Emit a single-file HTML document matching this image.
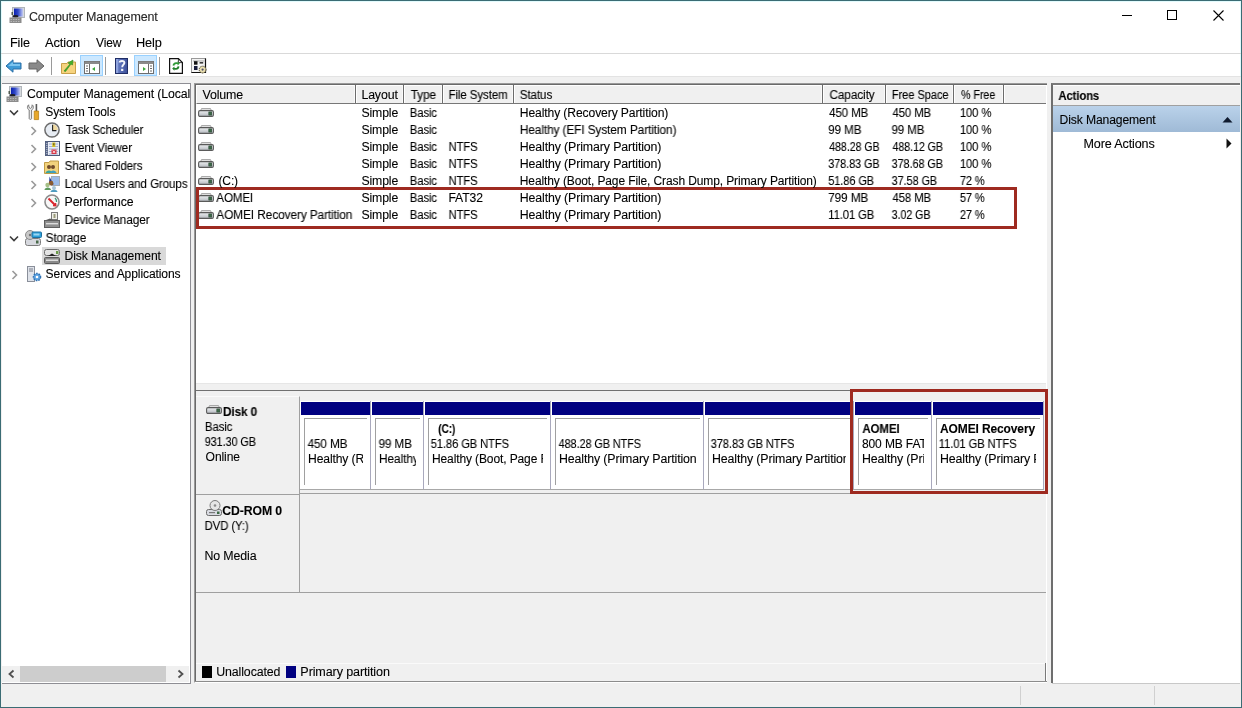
<!DOCTYPE html>
<html><head><meta charset="utf-8">
<style>
*{margin:0;padding:0;box-sizing:border-box}
html,body{width:1242px;height:708px;overflow:hidden;background:#fff;font-family:"Liberation Sans",sans-serif;font-size:12px}
.a{position:absolute}
svg{position:absolute;overflow:visible}
.t{position:absolute;font-family:"Liberation Sans",sans-serif;font-size:12px;line-height:15px;white-space:nowrap;letter-spacing:-0.12px;color:#000;transform-origin:0 0;will-change:transform;-webkit-text-stroke:0.1px #000}
.sep{position:absolute;top:401px;width:1px;height:88px;background:#a9a9bd}
.pbar{position:absolute;top:402px;height:13px;background:#000080}
.pbox{position:absolute;top:418px;height:67px;border-left:1px solid #a0a0a0;border-top:1px solid #a0a0a0;background:#fff;overflow:hidden}
.pin{position:absolute;left:0;top:0;right:4px;bottom:0;overflow:hidden}
.hs{position:absolute;top:85px;width:1px;height:18px;background:#6c6c6c;box-shadow:1px 0 0 #fff,-1px 0 0 #fafafa}
.tsep{position:absolute;top:57px;width:1px;height:18px;background:#9a9a9a}
.hl{position:absolute;top:55px;width:23px;height:21px;background:#cce8ff;border:1px solid #99d1ff}
</style></head><body>
<svg width="0" height="0" style="position:absolute"><defs>
<symbol id="dsk" viewBox="0 0 16 9"><linearGradient id="dg" x1="0" y1="0" x2="0" y2="1"><stop offset="0" stop-color="#eef0f2"/><stop offset="1" stop-color="#b4b8be"/></linearGradient><path d="M2.5 2.8 L3.5 0.6 L12.5 0.6 L13.5 2.8" fill="#e6e6e6" stroke="#9a9a9a" stroke-width="0.9"/><rect x="0.6" y="2.6" width="14.8" height="5.8" rx="1.4" fill="url(#dg)" stroke="#5a5a5a" stroke-width="1.1"/><rect x="10.8" y="3.9" width="3" height="3.2" fill="#3d6848" stroke="#23432c" stroke-width="0.5"/></symbol>
</defs></svg>
<!-- window frame -->
<div class="a" style="left:0;top:0;width:1242px;height:708px;border:1px solid #3b6c74;background:#fff;box-shadow:inset 0 0 0 1px #e2fbfd"></div>
<!-- menu line -->
<div class="a" style="left:1px;top:53px;width:1240px;height:1px;background:#d9d9d9"></div>
<!-- grey band + status -->
<div class="a" style="left:1px;top:76px;width:1240px;height:631px;background:#f0f0f0;border-top:1px solid #e3e3e3"></div>

<!-- title icon -->
<svg style="left:9px;top:7px" width="16" height="16" viewBox="0 0 16 16">
 <defs><linearGradient id="scr" x1="0" x2="1" y1="0" y2="0"><stop offset="0" stop-color="#0c22b0"/><stop offset="0.45" stop-color="#3048c8"/><stop offset="1" stop-color="#c4ccf4"/></linearGradient></defs>
 <rect x="3.5" y="0.5" width="12" height="10" fill="#d6dade" stroke="#b0b5ba"/>
 <rect x="5" y="1.5" width="9" height="8" fill="url(#scr)"/>
 <ellipse cx="6.5" cy="9.3" rx="3" ry="1.3" fill="#1e1e28"/>
 <rect x="2.5" y="5" width="1.5" height="3" fill="#505a50"/>
 <rect x="0.5" y="10.5" width="12" height="5.5" fill="#8c8c8c"/>
 <path d="M1.5 12.5h10M1.5 14.5h10" stroke="#c4c4c4" stroke-width="0.8" stroke-dasharray="1.5 1"/>
</svg>
<div class="a" style="left:0;top:0"></div>
<!-- window controls -->
<div class="a" style="left:1122px;top:15px;width:10px;height:1px;background:#000"></div>
<div class="a" style="left:1167px;top:10px;width:10px;height:10px;border:1px solid #000"></div>
<svg style="left:1213px;top:10px" width="11" height="11" viewBox="0 0 11 11"><path d="M0.5 0.5 L10.5 10.5 M10.5 0.5 L0.5 10.5" stroke="#000" stroke-width="1.1"/></svg>

<!-- toolbar -->
<svg style="left:5px;top:59px" width="17" height="14" viewBox="0 0 17 14">
 <path d="M1 7 L8 0.8 L8 4 L16 4 L16 10 L8 10 L8 13.2 Z" fill="#3e9ad6" stroke="#2a6fa6" stroke-width="1"/>
 <path d="M3 7 L8 3 L8 5 L15 5 L15 7 Z" fill="#7cc4ef"/>
</svg>
<svg style="left:28px;top:59px" width="17" height="14" viewBox="0 0 17 14">
 <path d="M16 7 L9 0.8 L9 4 L1 4 L1 10 L9 10 L9 13.2 Z" fill="#8a8a8a" stroke="#666" stroke-width="1"/>
</svg>
<div class="tsep" style="left:51px"></div>
<svg style="left:61px;top:59px" width="15" height="15" viewBox="0 0 15 15">
 <path d="M0.5 4.5 L6 4.5 L7 3 L14.5 3 L14.5 14.5 L0.5 14.5 Z" fill="#f6d37e" stroke="#c9a14a"/>
 <path d="M3 12 L9 5 L7 4 L12 1 L11.5 6 L10 5 L4.5 12.5 Z" fill="#43b02a" stroke="#2d8a1c" stroke-width="0.6"/>
</svg>
<div class="hl" style="left:80px"></div>
<svg style="left:84px;top:61px" width="16" height="13" viewBox="0 0 16 13">
 <rect x="0.5" y="0.5" width="15" height="12" fill="#fff" stroke="#6d6d6d"/>
 <rect x="0.5" y="0.5" width="15" height="2.5" fill="#8a8a8a"/>
 <rect x="5" y="3" width="1" height="10" fill="#6d6d6d"/>
 <path d="M2 5h2M2 7.5h2M2 10h2" stroke="#6d6d6d"/>
 <path d="M11 6 L8 8 L11 10 Z" fill="#3aa83a"/>
</svg>
<div class="tsep" style="left:105px"></div>
<svg style="left:115px;top:58px" width="13" height="16" viewBox="0 0 13 16">
 <defs><linearGradient id="hg" x1="0" x2="1" y1="0" y2="0"><stop offset="0" stop-color="#6d84cc"/><stop offset="1" stop-color="#3c4f98"/></linearGradient></defs>
 <rect x="0.5" y="0.5" width="12" height="15" fill="url(#hg)" stroke="#1f2d66"/>
 <rect x="1" y="1" width="2.2" height="14" fill="#8ea2dc"/>
 <path d="M4.6 4.6 C4.6 2.6 9.4 2.2 9.4 4.8 C9.4 6.6 7.2 6.8 7.2 9.2" fill="none" stroke="#f2f4fa" stroke-width="1.9"/>
 <rect x="6.1" y="10.8" width="2.2" height="2.2" fill="#f2f4fa"/>
</svg>
<div class="hl" style="left:134px"></div>
<svg style="left:138px;top:61px" width="16" height="13" viewBox="0 0 16 13">
 <rect x="0.5" y="0.5" width="15" height="12" fill="#fff" stroke="#6d6d6d"/>
 <rect x="0.5" y="0.5" width="15" height="2.5" fill="#8a8a8a"/>
 <rect x="10" y="3" width="1" height="10" fill="#6d6d6d"/>
 <path d="M12 5h2M12 7.5h2M12 10h2" stroke="#6d6d6d"/>
 <path d="M5 6 L8 8 L5 10 Z" fill="#3aa83a"/>
</svg>
<div class="tsep" style="left:159px"></div>
<svg style="left:169px;top:58px" width="14" height="16" viewBox="0 0 14 16">
 <path d="M0.6 0.6 L9.4 0.6 L13.4 4.6 L13.4 15.4 L0.6 15.4 Z" fill="#fff" stroke="#111" stroke-width="1.2"/>
 <path d="M9.4 0.6 L9.4 4.6 L13.4 4.6" fill="none" stroke="#111" stroke-width="0.8"/>
 <path d="M3.6 7.6 C3.6 5 6.2 3.6 8.6 4.6 L8.6 3.2 L10.8 5.6 L8.6 7.6 L8.6 6.2 C7 5.6 5.4 6.4 5.4 7.8 Z" fill="#2e9a36"/>
 <path d="M10.4 8.4 C10.4 11 7.8 12.4 5.4 11.4 L5.4 12.8 L3.2 10.4 L5.4 8.4 L5.4 9.8 C7 10.4 8.6 9.6 8.6 8.2 Z" fill="#1f7f28"/>
</svg>
<svg style="left:191px;top:58px" width="17" height="17" viewBox="0 0 17 17">
 <rect x="0.5" y="0.5" width="14" height="14" fill="#f4f4f4" stroke="#9a9a9a"/>
 <path d="M0.5 14.5 L14.5 14.5 L14.5 0.5" fill="none" stroke="#111" stroke-width="1.2"/>
 <rect x="2" y="2" width="12" height="2" fill="#cfcfcf"/>
 <rect x="3" y="3.2" width="3.5" height="3.5" fill="#111"/>
 <rect x="8.6" y="4.2" width="3.6" height="1.3" fill="#111"/>
 <rect x="3" y="8" width="3.5" height="4" fill="#161a3a"/>
 <circle cx="11.6" cy="11.6" r="3.4" fill="#e9dfb0" stroke="#3a3420" stroke-width="1" stroke-dasharray="1.3 0.9"/>
 <circle cx="11.6" cy="11.6" r="1.1" fill="#4a4a6a"/>
</svg>

<!-- LEFT PANEL -->
<div class="a" style="left:2px;top:83px;width:189px;height:601px;border:1px solid #8e8e94;border-left:none;background:#fff"></div>
<div class="a" style="left:42px;top:247px;width:124px;height:18px;background:#d9d9d9"></div>
<div class="clip" style="position:absolute;left:1px;top:84px;width:189px;height:580px;overflow:hidden">
<div class="t" id="t6" style="left:27px;top:3px;transform:translateX(-1.03px) scaleX(1.0268);">Computer Management (Local</div>
<div class="t" id="t7" style="left:45.3px;top:21px;transform:translateX(-0.70px) scaleX(1.0044);">System Tools</div>
<div class="t" id="t8" style="left:64.8px;top:39px;transform:translateX(-0.19px) scaleX(0.9638);">Task Scheduler</div>
<div class="t" id="t9" style="left:64.6px;top:57px;transform:translateX(-1.36px) scaleX(0.9750);">Event Viewer</div>
<div class="t" id="t10" style="left:64.6px;top:75px;transform:translateX(-1.36px) scaleX(0.9684);">Shared Folders</div>
<div class="t" id="t11" style="left:64.6px;top:93px;transform:translateX(-1.36px) scaleX(0.9683);">Local Users and Groups</div>
<div class="t" id="t12" style="left:64.6px;top:111px;transform:translateX(-1.43px) scaleX(1.0227);">Performance</div>
<div class="t" id="t13" style="left:64.6px;top:129px;transform:translateX(-1.39px) scaleX(0.9918);">Device Manager</div>
<div class="t" id="t14" style="left:45.6px;top:147px;transform:translateX(-1.38px) scaleX(0.9850);">Storage</div>
<div class="t" id="t15" style="left:64.6px;top:165px;transform:translateX(-1.42px) scaleX(1.0138);">Disk Management</div>
<div class="t" id="t16" style="left:45.6px;top:183px;transform:translateX(-1.41px) scaleX(1.0083);">Services and Applications</div>
</div>
<!-- tree icons -->
<svg style="left:6px;top:86px" width="16" height="16" viewBox="0 0 16 16">
  <rect x="3.5" y="0.5" width="12" height="10" fill="#d6dade" stroke="#b0b5ba"/>
 <rect x="5" y="1.5" width="9" height="8" fill="url(#scr)"/>
 <ellipse cx="6.5" cy="9.3" rx="3" ry="1.3" fill="#1e1e28"/>
 <rect x="2.5" y="5" width="1.5" height="3" fill="#505a50"/>
 <rect x="0.5" y="10.5" width="12" height="5.5" fill="#8c8c8c"/>
 <path d="M1.5 12.5h10M1.5 14.5h10" stroke="#c4c4c4" stroke-width="0.8" stroke-dasharray="1.5 1"/>
</svg>
<svg style="left:9px;top:109px" width="10" height="7" viewBox="0 0 10 7"><path d="M1 1.5 L5 5.5 L9 1.5" fill="none" stroke="#3c3c3c" stroke-width="1.6"/></svg>
<svg style="left:27px;top:104px" width="12" height="16" viewBox="0 0 12 16">
 <path d="M1.6 0.8 C-0.2 2.2 0.2 5.2 2.2 6 L2.2 14.6 C2.2 15.6 4.6 15.6 4.6 14.6 L4.6 6 C6.6 5.2 7 2.2 5.2 0.8 L4.8 3.4 L3.4 4.4 L2 3.4 Z" fill="#ececec" stroke="#6e6e6e" stroke-width="0.9"/>
 <rect x="8.6" y="0" width="1.6" height="7" fill="#5a5a5a"/>
 <path d="M7.2 7 L11.6 7 L11.6 15.6 L7.2 15.6 Z" fill="#e8a82a" stroke="#b07a10" stroke-width="0.7"/>
</svg>
<!-- level2 chevrons -->
<svg style="left:30px;top:126px" width="7" height="10" viewBox="0 0 7 10"><path d="M1.5 1 L5.5 5 L1.5 9" fill="none" stroke="#9a9a9a" stroke-width="1.6"/></svg>
<svg style="left:30px;top:144px" width="7" height="10" viewBox="0 0 7 10"><path d="M1.5 1 L5.5 5 L1.5 9" fill="none" stroke="#9a9a9a" stroke-width="1.6"/></svg>
<svg style="left:30px;top:162px" width="7" height="10" viewBox="0 0 7 10"><path d="M1.5 1 L5.5 5 L1.5 9" fill="none" stroke="#9a9a9a" stroke-width="1.6"/></svg>
<svg style="left:30px;top:180px" width="7" height="10" viewBox="0 0 7 10"><path d="M1.5 1 L5.5 5 L1.5 9" fill="none" stroke="#9a9a9a" stroke-width="1.6"/></svg>
<svg style="left:30px;top:198px" width="7" height="10" viewBox="0 0 7 10"><path d="M1.5 1 L5.5 5 L1.5 9" fill="none" stroke="#9a9a9a" stroke-width="1.6"/></svg>
<svg style="left:9px;top:235px" width="10" height="7" viewBox="0 0 10 7"><path d="M1 1.5 L5 5.5 L9 1.5" fill="none" stroke="#3c3c3c" stroke-width="1.6"/></svg>
<svg style="left:11px;top:270px" width="7" height="10" viewBox="0 0 7 10"><path d="M1.5 1 L5.5 5 L1.5 9" fill="none" stroke="#9a9a9a" stroke-width="1.6"/></svg>
<!-- task scheduler clock -->
<svg style="left:44px;top:122px" width="16" height="16" viewBox="0 0 16 16">
 <circle cx="8" cy="8" r="7.1" fill="#e7ecf3" stroke="#6c6c6c" stroke-width="1.5"/>
 <path d="M8.6 2.2 A5.8 5.8 0 0 1 13.8 8 L8.6 8 Z" fill="#efd9a0"/>
 <path d="M8.6 2.8 L8.6 8.6 L12.4 8.6" fill="none" stroke="#222" stroke-width="1.1"/>
</svg>
<!-- event viewer -->
<svg style="left:45px;top:141px" width="15" height="15" viewBox="0 0 15 15">
 <rect x="0.5" y="0.5" width="14" height="14" fill="#e9edf6" stroke="#4e5a78"/>
 <rect x="0.5" y="0.5" width="2.5" height="14" fill="#5d6a8a"/>
 <path d="M1.8 2v11" stroke="#cfd6e6" stroke-width="0.9" stroke-dasharray="1 1"/>
 <path d="M4 3h9M4 5.5h9M4 8h9M4 10.5h9M4 13h9" stroke="#8fa0cc" stroke-width="0.8"/>
 <rect x="7.3" y="1.5" width="3" height="4.5" fill="#d8c020"/>
 <rect x="8.4" y="2.3" width="0.9" height="2" fill="#333"/>
 <rect x="6.5" y="8.5" width="5" height="4.5" fill="#d83848"/>
 <path d="M7.8 9.6l2.4 2.4M10.2 9.6l-2.4 2.4" stroke="#fff" stroke-width="0.8"/>
</svg>
<!-- shared folders -->
<svg style="left:44px;top:160px" width="15" height="14" viewBox="0 0 15 14">
 <path d="M0.5 2.5 L5 2.5 L6 1 L14.5 1 L14.5 13.5 L0.5 13.5 Z" fill="#f2d27d" stroke="#c29c45"/>
 <circle cx="5" cy="7" r="2" fill="#704a2a"/>
 <circle cx="9" cy="7" r="2" fill="#704a2a"/>
 <path d="M1.5 13 C2 9.5 8 9.5 8.5 13 Z" fill="#3aa6a0"/>
 <path d="M6 13 C6.5 9.5 12 9.5 12.5 13 Z" fill="#3f9fc0"/>
</svg>
<!-- local users -->
<svg style="left:44px;top:176px" width="16" height="16" viewBox="0 0 16 16">
 <rect x="7.5" y="0.5" width="8" height="9" fill="#9cbbe8" stroke="#a8acb0"/>
 <path d="M5.5 0.5 L9.5 9 L5 9 Z" fill="#14309a"/>
 <circle cx="7" cy="7.2" r="2.4" fill="#8a5a30"/>
 <circle cx="3.5" cy="9" r="2.2" fill="#a8c088"/>
 <path d="M0.5 14 C0.5 10.5 7 10.5 7 14 Z" fill="#5f9a60"/>
 <circle cx="10" cy="12" r="2" fill="#a6c6d8"/>
 <path d="M6.5 16 C6.5 13 13.5 13 13.5 16 Z" fill="#4f9cc0"/>
</svg>
<!-- performance -->
<svg style="left:44px;top:194px" width="16" height="16" viewBox="0 0 16 16">
 <circle cx="8" cy="8" r="7" fill="#f7f7f7" stroke="#8a8a8a" stroke-width="1.6"/>
 <path d="M4.5 4.5 L11.5 11.5" stroke="#d8262e" stroke-width="2"/>
 <path d="M9 11.5 L11.8 11.8 L11.5 9" fill="none" stroke="#d8262e" stroke-width="1.4"/>
 <path d="M11 4 A5 5 0 0 1 12.5 8" stroke="#3a9a7a" stroke-width="1.2" fill="none"/>
</svg>
<!-- device manager -->
<svg style="left:44px;top:212px" width="16" height="16" viewBox="0 0 16 16">
 <rect x="7.5" y="0.5" width="6" height="7" fill="#f0f0e8" stroke="#7a7a7a"/>
 <rect x="9.5" y="2" width="2" height="4" fill="#9a9a7a"/>
 <path d="M2 8 L6 6.5 L9 8 Z" fill="#5a5a5a"/>
 <rect x="0.5" y="8.5" width="15" height="7" fill="#8e8e8e" stroke="#5e5e5e"/>
 <rect x="2" y="11" width="12" height="1.4" fill="#dcdcdc"/>
</svg>
<!-- storage -->
<svg style="left:25px;top:230px" width="17" height="16" viewBox="0 0 17 16">
 <rect x="0.5" y="8.5" width="15" height="7" rx="2" fill="#d6d8de" stroke="#7c7c7c"/>
 <rect x="11" y="10.5" width="2.5" height="3" fill="#4a6a4a"/>
 <circle cx="5" cy="5" r="4.5" fill="#c8c8c8" stroke="#8a8a8a"/>
 <circle cx="5" cy="5" r="1.2" fill="#777"/>
 <rect x="7" y="2" width="9.5" height="5.5" rx="1" fill="#2ea0d8" stroke="#1d6fa0"/>
 <rect x="8.5" y="3.5" width="6" height="2" fill="#9ad6f2"/>
</svg>
<!-- disk management -->
<svg style="left:44px;top:248px" width="16" height="16" viewBox="0 0 16 16">
 <rect x="0.5" y="1.5" width="15" height="6" rx="2" fill="#e4e4e4" stroke="#6c6c6c"/>
 <rect x="0.5" y="9.5" width="15" height="6" rx="1" fill="#8a8a8a" stroke="#5a5a5a"/>
 <rect x="2" y="11.5" width="12" height="1.5" fill="#dedede"/>
 <path d="M4 8 L8 5.5 L12 8 Z" fill="#222"/>
 <rect x="12" y="3" width="2.5" height="3" fill="#6a9a4a"/>
</svg>
<!-- services -->
<svg style="left:27px;top:266px" width="15" height="16" viewBox="0 0 15 16">
 <rect x="0.5" y="0.5" width="7" height="15" fill="#dfe3ea" stroke="#8a8f9a"/>
 <path d="M2 3h4M2 5h4" stroke="#7a7f8a"/>
 <circle cx="10" cy="11" r="3.6" fill="#5aa0e0" stroke="#2f6fb0" stroke-width="1.4" stroke-dasharray="1.6 1"/>
 <circle cx="10" cy="11" r="1.3" fill="#fff"/>
</svg>
<!-- left scrollbar -->
<div class="a" style="left:2px;top:666px;width:187px;height:16px;background:#f0f0f0"></div>
<div class="a" style="left:20px;top:666px;width:146px;height:16px;background:#cdcdcd"></div>
<svg style="left:8px;top:670px" width="7" height="8" viewBox="0 0 7 8"><path d="M5.5 0.5 L1.5 4 L5.5 7.5" fill="none" stroke="#505050" stroke-width="1.8"/></svg>
<svg style="left:177px;top:670px" width="7" height="8" viewBox="0 0 7 8"><path d="M1.5 0.5 L5.5 4 L1.5 7.5" fill="none" stroke="#505050" stroke-width="1.8"/></svg>

<!-- CENTER PANEL -->
<div class="a" style="left:194px;top:83px;width:853px;height:600px;border-left:1px solid #9a9a9a;border-top:1px solid #9a9a9a;border-bottom:1px solid #fff;background:#fff"></div>
<div class="a" style="left:195px;top:84px;width:1px;height:598px;background:#6a6a6a"></div>
<div class="a" style="left:195px;top:84px;width:852px;height:1px;background:#6a6a6a"></div>
<div class="a" style="left:196px;top:85px;width:850px;height:19px;background:#f0f0f0;border-top:1px solid #fff;border-left:1px solid #fff;border-bottom:1px solid #777"></div>
<div class="hs" style="left:355px"></div>
<div class="hs" style="left:403px"></div>
<div class="hs" style="left:442px"></div>
<div class="hs" style="left:513px"></div>
<div class="hs" style="left:822px"></div>
<div class="hs" style="left:885px"></div>
<div class="hs" style="left:953px"></div>
<div class="hs" style="left:1003px"></div>
<!-- volume icons -->
<svg style="left:198px;top:108px" width="16" height="9" viewBox="0 0 16 9"><use href="#dsk"/></svg>
<svg style="left:198px;top:125px" width="16" height="9" viewBox="0 0 16 9"><use href="#dsk"/></svg>
<svg style="left:198px;top:142px" width="16" height="9" viewBox="0 0 16 9"><use href="#dsk"/></svg>
<svg style="left:198px;top:159px" width="16" height="9" viewBox="0 0 16 9"><use href="#dsk"/></svg>
<svg style="left:198px;top:176px" width="16" height="9" viewBox="0 0 16 9"><use href="#dsk"/></svg>
<svg style="left:198px;top:193px" width="16" height="9" viewBox="0 0 16 9"><use href="#dsk"/></svg>
<svg style="left:198px;top:210px" width="16" height="9" viewBox="0 0 16 9"><use href="#dsk"/></svg>
<!-- disk area -->
<div class="a" style="left:196px;top:383px;width:850px;height:7px;background:#f0f0f0;border-top:1px solid #e6e6e6"></div>
<div class="a" style="left:196px;top:390px;width:850px;height:1px;background:#707070"></div>
<div class="a" style="left:196px;top:391px;width:850px;height:291px;background:#f0f0f0"></div>
<div class="a" style="left:196px;top:396px;width:104px;height:99px;border-right:1px solid #a0a0a0;border-bottom:1px solid #a0a0a0;border-top:1px solid #fafafa"></div>
<div class="a" style="left:300px;top:401px;width:744px;height:89px;background:#fff;border-bottom:1px solid #a8a8a8"></div>
<div class="a" style="left:196px;top:494px;width:104px;height:1px;background:#a0a0a0"></div>
<div class="a" style="left:299px;top:493px;width:747px;height:1px;background:#a0a0a0"></div>
<div class="a" style="left:196px;top:592px;width:850px;height:1px;background:#a0a0a0"></div>
<div class="a" style="left:299px;top:495px;width:1px;height:98px;background:#a0a0a0"></div>
<svg style="left:206px;top:405px" width="16" height="9" viewBox="0 0 16 9"><use href="#dsk"/></svg>
<svg style="left:206px;top:500px" width="16" height="16" viewBox="0 0 16 16">
 <rect x="0.5" y="9.5" width="15" height="6" rx="2" fill="#d9dbe2" stroke="#6a6a6a"/>
 <rect x="3" y="12" width="6" height="1.2" fill="#7a7a7a"/>
 <rect x="11" y="11.5" width="2.5" height="2.5" fill="#3d6a45"/>
 <circle cx="9" cy="5.5" r="5" fill="#e6e6e6" stroke="#7a7a7a"/>
 <circle cx="9" cy="5.5" r="1.3" fill="#8a8a8a"/>
</svg>
<!-- legend -->
<div class="a" style="left:196px;top:663px;width:850px;height:1px;background:#fafafa"></div>
<div class="a" style="left:195px;top:681px;width:852px;height:1px;background:#8c8c8c"></div>
<div class="a" style="left:202px;top:666px;width:10px;height:12px;background:#000"></div>
<div class="a" style="left:286px;top:666px;width:10px;height:12px;background:#000080"></div>
<div class="sep" style="left:370px"></div>
<div class="pbar" style="left:301px;width:69px"></div>
<div class="pbox" style="left:304px;width:63px"><div class="pin">
<div class="t" id="t87" style="left:2.6000000000000227px;top:18px;transform:translateX(-0.39px) scaleX(0.9775);">450 MB</div>
<div class="t" id="t88" style="left:2.6000000000000227px;top:33px;transform:scaleX(1.0117);">Healthy (Recovery Partition)</div>
</div></div>
<div class="sep" style="left:423px"></div>
<div class="pbar" style="left:372px;width:51px"></div>
<div class="pbox" style="left:375px;width:45px"><div class="pin">
<div class="t" id="t89" style="left:2.6000000000000227px;top:18px;transform:translateX(-0.39px) scaleX(0.9735);">99 MB</div>
<div class="t" id="t90" style="left:2.6000000000000227px;top:33px;transform:scaleX(0.9917);">Healthy (EFI System Partition)</div>
</div></div>
<div class="sep" style="left:550px"></div>
<div class="pbar" style="left:425px;width:125px"></div>
<div class="pbox" style="left:428px;width:119px"><div class="pin">
<div class="t" id="t91" style="left:10px;top:3px;font-weight:bold;transform:translateX(-0.85px) scaleX(0.8474);">(C:)</div>
<div class="t" id="t92" style="left:2.6000000000000227px;top:18px;transform:translateX(-1.31px) scaleX(0.9329);">51.86 GB NTFS</div>
<div class="t" id="t93" style="left:2.6000000000000227px;top:33px;transform:scaleX(1.0007);">Healthy (Boot, Page File, Crash Dump, Primary Partition)</div>
</div></div>
<div class="sep" style="left:703px"></div>
<div class="pbar" style="left:552px;width:151px"></div>
<div class="pbox" style="left:555px;width:145px"><div class="pin">
<div class="t" id="t94" style="left:2.6000000000000227px;top:18px;transform:translateX(-0.36px) scaleX(0.9100);">488.28 GB NTFS</div>
<div class="t" id="t95" style="left:2.6000000000000227px;top:33px;transform:scaleX(1.0301);">Healthy (Primary Partition)</div>
</div></div>
<div class="sep" style="left:853px"></div>
<div class="pbar" style="left:705px;width:148px"></div>
<div class="pbox" style="left:708px;width:142px"><div class="pin">
<div class="t" id="t96" style="left:2.6000000000000227px;top:18px;transform:translateX(-1.30px) scaleX(0.9258);">378.83 GB NTFS</div>
<div class="t" id="t97" style="left:2.6000000000000227px;top:33px;transform:scaleX(1.0301);">Healthy (Primary Partition)</div>
</div></div>
<div class="sep" style="left:931px"></div>
<div class="pbar" style="left:855px;width:76px"></div>
<div class="pbox" style="left:858px;width:70px"><div class="pin">
<div class="t" id="t98" style="left:3.3999999999999773px;top:3px;font-weight:bold;transform:translateX(0.38px) scaleX(0.9579);">AOMEI</div>
<div class="t" id="t99" style="left:2.6000000000000227px;top:18px;">800 MB FAT32</div>
<div class="t" id="t100" style="left:2.6000000000000227px;top:33px;transform:scaleX(1.0301);">Healthy (Primary Partition)</div>
</div></div>
<div class="sep" style="left:1043px"></div>
<div class="pbar" style="left:933px;width:110px"></div>
<div class="pbox" style="left:936px;width:104px"><div class="pin">
<div class="t" id="t101" style="left:3.3999999999999773px;top:3px;font-weight:bold;">AOMEI Recovery Partition</div>
<div class="t" id="t102" style="left:2.6000000000000227px;top:18px;transform:translateX(-1.31px) scaleX(0.9395);">11.01 GB NTFS</div>
<div class="t" id="t103" style="left:2.6000000000000227px;top:33px;transform:scaleX(1.0301);">Healthy (Primary Partition)</div>
</div></div>

<!-- ACTIONS PANEL -->
<div class="a" style="left:1051px;top:83px;width:189px;height:600px;border-left:2px solid #6e6e6e;border-top:2px solid #7a7a7a;background:#fff"></div>
<div class="a" style="left:1052px;top:683px;width:188px;height:1px;background:#c8c8c8"></div>
<div class="a" style="left:1045px;top:663px;width:1px;height:18px;background:#7a7a7a"></div>
<div class="a" style="left:1053px;top:85px;width:187px;height:21px;background:#f0f0f0;border-top:1px solid #fff;border-bottom:1px solid #a0a0a0"></div>
<div class="a" style="left:1053px;top:106px;width:187px;height:26px;background:linear-gradient(#bad2ea,#9fbad6)"></div>
<svg style="left:1222px;top:116px" width="11" height="7" viewBox="0 0 11 7"><path d="M0.5 6.5 L5.5 1 L10.5 6.5 Z" fill="#0f1a2e"/></svg>
<svg style="left:1226px;top:138px" width="6" height="11" viewBox="0 0 6 11"><path d="M0.5 0.5 L5.5 5.5 L0.5 10.5 Z" fill="#111"/></svg>

<!-- status bar separators -->
<div class="a" style="left:1020px;top:686px;width:1px;height:19px;background:#d0d0d0"></div>
<div class="a" style="left:1154px;top:686px;width:1px;height:19px;background:#d0d0d0"></div>
<!-- red boxes -->
<div class="a" style="left:196px;top:187px;width:821px;height:42px;border:3px solid #9e2a20"></div>
<div class="a" style="left:850px;top:389px;width:198px;height:105px;border:3px solid #9e2a20"></div>
<div class="t" id="t1" style="left:30px;top:10px;color:#2b2b2b;transform:translateX(-1.04px) scaleX(1.0398);">Computer Management</div>
<div class="t" id="t2" style="left:11px;top:36px;transform:translateX(-1.06px) scaleX(1.0588);">File</div>
<div class="t" id="t3" style="left:45px;top:36px;transform:translateX(0.00px) scaleX(1.0719);">Action</div>
<div class="t" id="t4" style="left:96px;top:36px;transform:translateX(0.00px) scaleX(1.0000);">View</div>
<div class="t" id="t5" style="left:137px;top:36px;transform:translateX(-1.07px) scaleX(1.0652);">Help</div>
<div class="t" id="t17" style="left:202.4px;top:88px;transform:translateX(0.41px) scaleX(1.0359);">Volume</div>
<div class="t" id="t18" style="left:362.4px;top:88px;transform:translateX(-0.62px) scaleX(1.0294);">Layout</div>
<div class="t" id="t19" style="left:410.7px;top:88px;transform:translateX(-0.30px) scaleX(0.9880);">Type</div>
<div class="t" id="t20" style="left:449.5px;top:88px;transform:translateX(-1.44px) scaleX(0.9617);">File System</div>
<div class="t" id="t21" style="left:520.7px;top:88px;transform:translateX(-1.26px) scaleX(0.9719);">Status</div>
<div class="t" id="t22" style="left:829.5px;top:88px;transform:translateX(-0.49px) scaleX(0.9848);">Capacity</div>
<div class="t" id="t23" style="left:892.7px;top:88px;transform:translateX(-1.21px) scaleX(0.9322);">Free Space</div>
<div class="t" id="t24" style="left:961px;top:88px;transform:translateX(0.00px) scaleX(0.9000);">% Free</div>
<div class="t" id="t25" style="left:362.4px;top:106px;transform:translateX(-0.61px) scaleX(1.0229);">Simple</div>
<div class="t" id="t26" style="left:410.7px;top:106px;transform:translateX(-1.23px) scaleX(0.9444);">Basic</div>
<div class="t" id="t27" style="left:520.8px;top:106px;transform:translateX(-1.21px) scaleX(1.0117);">Healthy (Recovery Partition)</div>
<div class="t" id="t28" style="left:829.2px;top:106px;transform:translateX(0.19px) scaleX(0.9575);">450 MB</div>
<div class="t" id="t29" style="left:892.5px;top:106px;transform:translateX(-0.47px) scaleX(0.9450);">450 MB</div>
<div class="t" id="t30" style="left:960.8px;top:106px;transform:translateX(-1.12px) scaleX(0.9375);">100 %</div>
<div class="t" id="t31" style="left:362.4px;top:123px;transform:translateX(-0.61px) scaleX(1.0229);">Simple</div>
<div class="t" id="t32" style="left:410.7px;top:123px;transform:translateX(-1.23px) scaleX(0.9444);">Basic</div>
<div class="t" id="t33" style="left:520.8px;top:123px;transform:translateX(-1.19px) scaleX(0.9917);">Healthy (EFI System Partition)</div>
<div class="t" id="t34" style="left:829.2px;top:123px;transform:translateX(-0.78px) scaleX(0.9727);">99 MB</div>
<div class="t" id="t35" style="left:892.5px;top:123px;transform:translateX(-1.44px) scaleX(0.9606);">99 MB</div>
<div class="t" id="t36" style="left:960.8px;top:123px;transform:translateX(-1.12px) scaleX(0.9375);">100 %</div>
<div class="t" id="t37" style="left:362.4px;top:140px;transform:translateX(-0.61px) scaleX(1.0229);">Simple</div>
<div class="t" id="t38" style="left:410.7px;top:140px;transform:translateX(-1.23px) scaleX(0.9444);">Basic</div>
<div class="t" id="t39" style="left:449.5px;top:140px;transform:translateX(-1.40px) scaleX(0.9345);">NTFS</div>
<div class="t" id="t40" style="left:520.8px;top:140px;transform:translateX(-1.24px) scaleX(1.0301);">Healthy (Primary Partition)</div>
<div class="t" id="t41" style="left:829.2px;top:140px;transform:translateX(0.18px) scaleX(0.8929);">488.28 GB</div>
<div class="t" id="t42" style="left:892.5px;top:140px;transform:translateX(-0.45px) scaleX(0.8929);">488.12 GB</div>
<div class="t" id="t43" style="left:960.8px;top:140px;transform:translateX(-1.12px) scaleX(0.9375);">100 %</div>
<div class="t" id="t44" style="left:362.4px;top:157px;transform:translateX(-0.61px) scaleX(1.0229);">Simple</div>
<div class="t" id="t45" style="left:410.7px;top:157px;transform:translateX(-1.23px) scaleX(0.9444);">Basic</div>
<div class="t" id="t46" style="left:449.5px;top:157px;transform:translateX(-1.40px) scaleX(0.9345);">NTFS</div>
<div class="t" id="t47" style="left:520.8px;top:157px;transform:translateX(-1.24px) scaleX(1.0301);">Healthy (Primary Partition)</div>
<div class="t" id="t48" style="left:829.2px;top:157px;transform:translateX(-0.73px) scaleX(0.9091);">378.83 GB</div>
<div class="t" id="t49" style="left:892.5px;top:157px;transform:translateX(-1.36px) scaleX(0.9091);">378.68 GB</div>
<div class="t" id="t50" style="left:960.8px;top:157px;transform:translateX(-1.12px) scaleX(0.9375);">100 %</div>
<div class="t" id="t51" style="left:219.4px;top:174px;transform:translateX(-0.60px) scaleX(1.0056);">(C:)</div>
<div class="t" id="t52" style="left:362.4px;top:174px;transform:translateX(-0.61px) scaleX(1.0229);">Simple</div>
<div class="t" id="t53" style="left:410.7px;top:174px;transform:translateX(-1.23px) scaleX(0.9444);">Basic</div>
<div class="t" id="t54" style="left:449.5px;top:174px;transform:translateX(-1.40px) scaleX(0.9345);">NTFS</div>
<div class="t" id="t55" style="left:520.8px;top:174px;transform:translateX(-1.20px) scaleX(1.0007);">Healthy (Boot, Page File, Crash Dump, Primary Partition)</div>
<div class="t" id="t56" style="left:829.2px;top:174px;transform:translateX(-0.73px) scaleX(0.9187);">51.86 GB</div>
<div class="t" id="t57" style="left:892.5px;top:174px;transform:translateX(-1.37px) scaleX(0.9125);">37.58 GB</div>
<div class="t" id="t58" style="left:960.8px;top:174px;transform:translateX(-1.10px) scaleX(0.9192);">72 %</div>
<div class="t" id="t59" style="left:216.3px;top:191px;transform:translateX(0.29px) scaleX(0.9676);">AOMEI</div>
<div class="t" id="t60" style="left:362.4px;top:191px;transform:translateX(-0.61px) scaleX(1.0229);">Simple</div>
<div class="t" id="t61" style="left:410.7px;top:191px;transform:translateX(-1.23px) scaleX(0.9444);">Basic</div>
<div class="t" id="t62" style="left:449.5px;top:191px;transform:translateX(-1.52px) scaleX(1.0125);">FAT32</div>
<div class="t" id="t63" style="left:520.8px;top:191px;transform:translateX(-1.24px) scaleX(1.0301);">Healthy (Primary Partition)</div>
<div class="t" id="t64" style="left:829.2px;top:191px;transform:translateX(-0.79px) scaleX(0.9821);">799 MB</div>
<div class="t" id="t65" style="left:892.5px;top:191px;transform:translateX(-0.47px) scaleX(0.9450);">458 MB</div>
<div class="t" id="t66" style="left:960.8px;top:191px;transform:translateX(-1.10px) scaleX(0.9192);">57 %</div>
<div class="t" id="t67" style="left:216.3px;top:208px;transform:translateX(0.30px) scaleX(0.9919);">AOMEI Recovery Partition</div>
<div class="t" id="t68" style="left:362.4px;top:208px;transform:translateX(-0.61px) scaleX(1.0229);">Simple</div>
<div class="t" id="t69" style="left:410.7px;top:208px;transform:translateX(-1.23px) scaleX(0.9444);">Basic</div>
<div class="t" id="t70" style="left:449.5px;top:208px;transform:translateX(-1.40px) scaleX(0.9345);">NTFS</div>
<div class="t" id="t71" style="left:520.8px;top:208px;transform:translateX(-1.24px) scaleX(1.0301);">Healthy (Primary Partition)</div>
<div class="t" id="t72" style="left:829.2px;top:208px;transform:translateX(-0.75px) scaleX(0.9383);">11.01 GB</div>
<div class="t" id="t73" style="left:892.5px;top:208px;transform:translateX(-1.35px) scaleX(0.9000);">3.02 GB</div>
<div class="t" id="t74" style="left:960.8px;top:208px;transform:translateX(-1.10px) scaleX(0.9192);">27 %</div>
<div class="t" id="t75" style="left:1058.4px;top:89px;font-weight:bold;transform:translateX(0.38px) scaleX(0.9442);">Actions</div>
<div class="t" id="t76" style="left:1060.5px;top:113px;transform:translateX(-1.52px) scaleX(1.0128);">Disk Management</div>
<div class="t" id="t77" style="left:1084.5px;top:137px;transform:translateX(-1.57px) scaleX(1.0478);">More Actions</div>
<div class="t" id="t78" style="left:223.9px;top:405px;font-weight:bold;transform:translateX(-1.09px) scaleX(0.9879);">Disk 0</div>
<div class="t" id="t79" style="left:205.8px;top:420px;transform:translateX(-1.15px) scaleX(0.9556);">Basic</div>
<div class="t" id="t80" style="left:205.6px;top:435px;transform:translateX(-1.27px) scaleX(0.9073);">931.30 GB</div>
<div class="t" id="t81" style="left:205.6px;top:450px;transform:translateX(-0.40px) scaleX(1.0088);">Online</div>
<div class="t" id="t82" style="left:223.3px;top:504px;font-weight:bold;transform:translateX(-0.72px) scaleX(1.0228);">CD-ROM 0</div>
<div class="t" id="t83" style="left:205.5px;top:519px;transform:translateX(-1.42px) scaleX(0.9489);">DVD (Y:)</div>
<div class="t" id="t84" style="left:205.5px;top:549px;transform:translateX(-1.55px) scaleX(1.0327);">No Media</div>
<div class="t" id="t85" style="left:217.3px;top:665px;transform:translateX(-0.72px) scaleX(1.0317);">Unallocated</div>
<div class="t" id="t86" style="left:301.4px;top:665px;transform:translateX(-0.63px) scaleX(1.0476);">Primary partition</div>
</body></html>
